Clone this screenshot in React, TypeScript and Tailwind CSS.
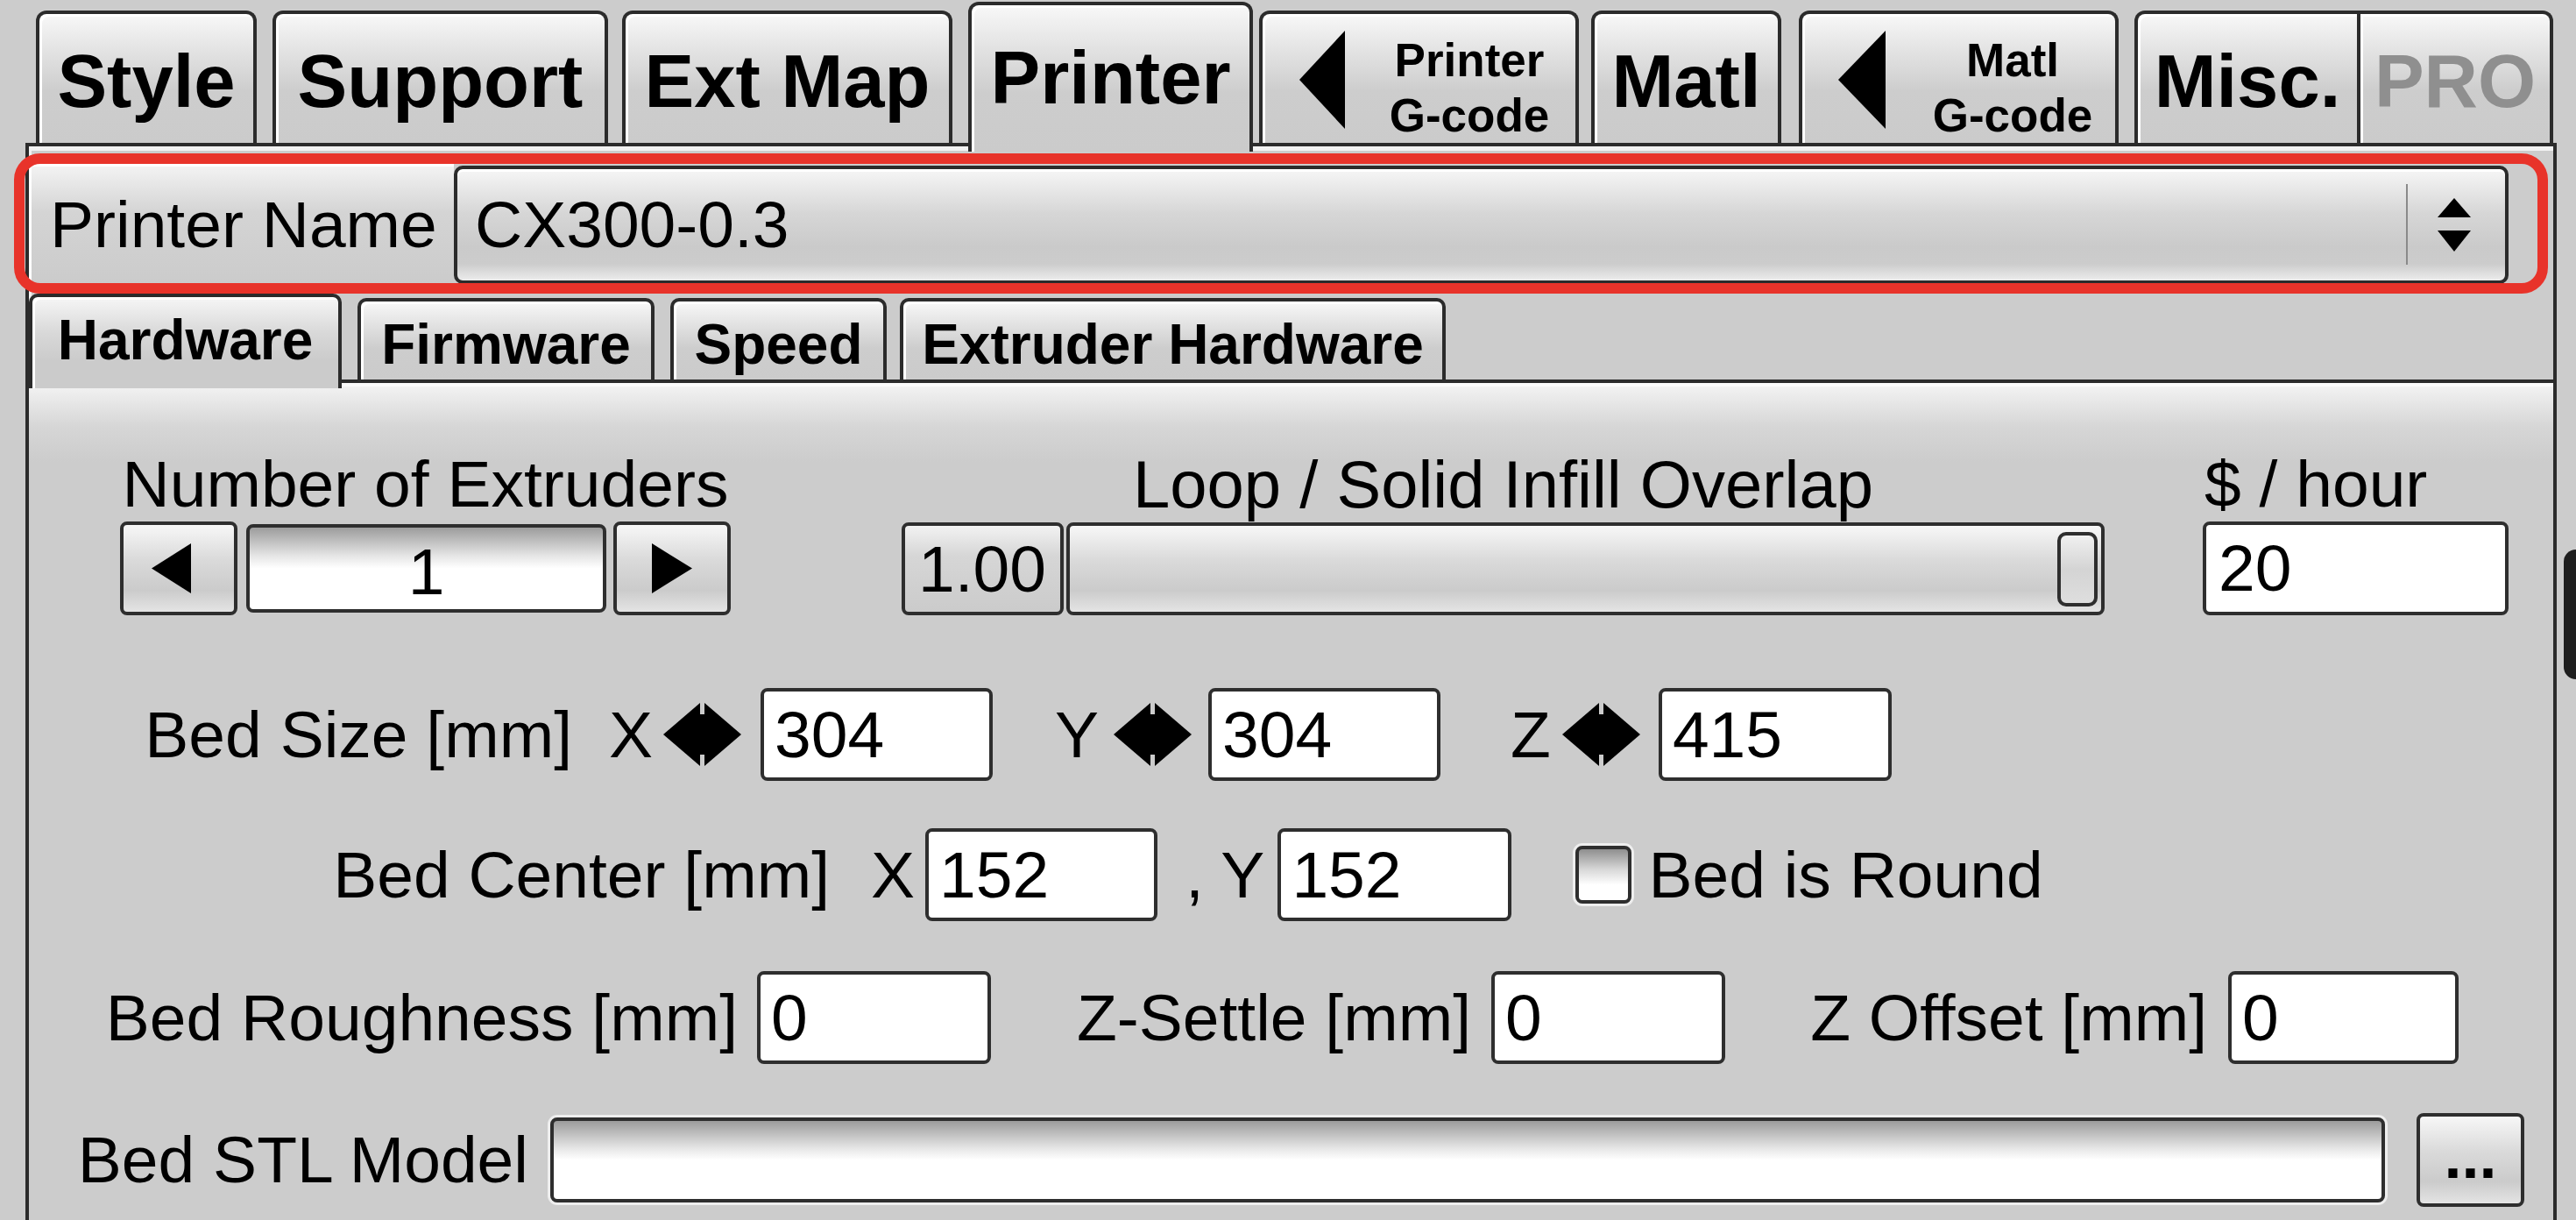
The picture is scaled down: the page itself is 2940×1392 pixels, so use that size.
import React from "react";

const tabBg =
  "bg-[linear-gradient(to_bottom,#f8f8f8_0%,#e2e2e2_30%,#cdcdcd_60%,#cbcbcb_100%)]";
const btnBg =
  "bg-[linear-gradient(to_bottom,#f7f7f7_0%,#dadada_40%,#cbcbcb_75%,#e4e4e4_100%)]";
const fieldBg =
  "bg-[linear-gradient(to_bottom,#9c9c9c_0%,#e6e6e6_35%,#ffffff_50%,#ffffff_100%)]";

function Tab({
  cls,
  children,
}: {
  cls: string;
  children: React.ReactNode;
}) {
  return (
    <div
      className={`box-border flex shrink-0 justify-center border-[4px] border-b-0 border-[#2b2b2b] shadow-[inset_3px_3px_0_#ffffff] ${tabBg} ${cls}`}
    >
      {children}
    </div>
  );
}

function LeftTri({ w, h }: { w: number; h: number }) {
  return (
    <svg width={w} height={h} viewBox={`0 0 ${w} ${h}`} className="shrink-0">
      <path d={`M0 ${h / 2} L${w} 0 V${h} Z`} fill="#000" />
    </svg>
  );
}

function RightTri({ w, h }: { w: number; h: number }) {
  return (
    <svg width={w} height={h} viewBox={`0 0 ${w} ${h}`} className="shrink-0">
      <path d={`M${w} ${h / 2} L0 0 V${h} Z`} fill="#000" />
    </svg>
  );
}

function DArrow({ cls }: { cls: string }) {
  return (
    <svg width="89" height="72" viewBox="0 0 89 72" className={`shrink-0 ${cls}`}>
      <path d="M0 36 L42 0 V72 Z" fill="#000" />
      <path d="M89 36 L47 0 V72 Z" fill="#000" />
      <rect x="40" y="13" width="9" height="46" fill="#000" />
    </svg>
  );
}

function Input({ cls, children }: { cls: string; children?: React.ReactNode }) {
  return (
    <div
      className={`box-border flex h-[106px] shrink-0 items-center rounded-[8px] border-[4px] border-[#2e2e2e] bg-white pl-[12px] text-[75px] leading-none ${cls}`}
    >
      {children}
    </div>
  );
}

export default function App() {
  return (
    <div className="relative h-[1392px] w-[2940px] overflow-hidden bg-[#cccccc] font-['Liberation_Sans',Arial,sans-serif] text-black">
      {/* Top tabs */}
      <div className="flex h-[163px] items-start pl-[41px]">
        <Tab cls="mt-[12px] h-[151px] w-[252px] rounded-t-[12px]">
          <span className="mt-[34px] text-[85px] font-bold leading-none">Style</span>
        </Tab>
        <Tab cls="ml-[18px] mt-[12px] h-[151px] w-[383px] rounded-t-[12px]">
          <span className="mt-[34px] text-[85px] font-bold leading-none">Support</span>
        </Tab>
        <Tab cls="ml-[16px] mt-[12px] h-[151px] w-[377px] rounded-t-[12px]">
          <span className="mt-[34px] whitespace-nowrap text-[85px] font-bold leading-none">Ext Map</span>
        </Tab>
        <Tab cls="relative z-10 ml-[18px] mt-[2px] h-[171px] w-[325px] rounded-t-[12px]">
          <span className="mt-[40px] text-[85px] font-bold leading-none">Printer</span>
        </Tab>
        <Tab cls="ml-[7px] mt-[12px] h-[151px] w-[365px] rounded-t-[12px] !justify-start">
          <div className="ml-[42px] mt-[19px]">
            <LeftTri w={52} h={112} />
          </div>
          <div className="ml-[37px] mt-[21px] flex w-[210px] flex-col items-center text-[53px] font-bold leading-[63px]">
            <span>Printer</span>
            <span>G-code</span>
          </div>
        </Tab>
        <Tab cls="ml-[14px] mt-[12px] h-[151px] w-[217px] rounded-t-[12px]">
          <span className="mt-[34px] text-[85px] font-bold leading-none">Matl</span>
        </Tab>
        <Tab cls="ml-[20px] mt-[12px] h-[151px] w-[365px] rounded-t-[12px] !justify-start">
          <div className="ml-[41px] mt-[19px]">
            <LeftTri w={54} h={112} />
          </div>
          <div className="ml-[40px] mt-[21px] flex w-[210px] flex-col items-center text-[53px] font-bold leading-[63px]">
            <span>Matl</span>
            <span>G-code</span>
          </div>
        </Tab>
        <Tab cls="ml-[18px] mt-[12px] h-[151px] w-[258px] rounded-tl-[12px]">
          <span className="mt-[34px] text-[85px] font-bold leading-none">Misc.</span>
        </Tab>
        <Tab cls="mt-[12px] h-[151px] w-[220px] !border-l-0 rounded-tr-[12px]">
          <span className="mt-[34px] text-[85px] font-bold leading-none text-[#8f8f8f]">PRO</span>
        </Tab>
      </div>

      {/* Panel */}
      <div className="relative ml-[29px] box-border h-[1229px] w-[2889px] border-x-[4px] border-t-[4px] border-[#2b2b2b] shadow-[inset_3px_5px_0_#f2f2f2]">
        {/* Printer name row */}
        <div className="mt-[20px] flex h-[138px]">
          <div className="flex h-full w-[485px] shrink-0 items-center bg-[linear-gradient(to_bottom,#f4f4f4_0%,#d4d4d4_40%,#cbcbcb_100%)] pl-[24px] text-[75px] leading-none shadow-[inset_3px_3px_0_#ffffff]">
            Printer Name
          </div>
          <div
            className={`box-border flex h-[135px] w-[2345px] shrink-0 items-center self-center rounded-[10px] border-[4px] border-[#2b2b2b] bg-[linear-gradient(to_bottom,#f6f6f6_0%,#d6d6d6_40%,#cacaca_70%,#cccccc_85%,#ececec_100%)] shadow-[inset_0_3px_0_#ffffff]`}
          >
            <span className="pl-[20px] text-[75px] leading-none">CX300-0.3</span>
            <div className="flex-1" />
            <div className="h-[92px] w-[2px] bg-[#8a8a8a]" />
            <div className="ml-[34px] mr-[39px] flex w-[38px] flex-col items-center gap-[15px]">
              <svg width="38" height="22" viewBox="0 0 38 22">
                <path d="M0 22 L19 0 L38 22 Z" fill="#000" />
              </svg>
              <svg width="38" height="24" viewBox="0 0 38 24">
                <path d="M0 0 H38 L19 24 Z" fill="#000" />
              </svg>
            </div>
          </div>
        </div>

        {/* Sub tabs */}
        <div className="mt-[10px] flex h-[98px] items-start">
          <Tab cls="relative z-10 h-[108px] w-[357px] rounded-t-[10px] !bg-[linear-gradient(to_bottom,#f6f6f6_0%,#d8d8d8_40%,#cbcbcb_70%,#cbcbcb_100%)]">
            <span className="mt-[17px] text-[64px] font-bold leading-none">Hardware</span>
          </Tab>
          <Tab cls="ml-[18px] mt-[5px] h-[93px] w-[339px] rounded-t-[10px]">
            <span className="mt-[17px] text-[64px] font-bold leading-none">Firmware</span>
          </Tab>
          <Tab cls="ml-[18px] mt-[5px] h-[93px] w-[247px] rounded-t-[10px]">
            <span className="mt-[17px] text-[64px] font-bold leading-none">Speed</span>
          </Tab>
          <Tab cls="ml-[15px] mt-[5px] h-[93px] w-[623px] rounded-t-[10px]">
            <span className="mt-[17px] whitespace-nowrap text-[64px] font-bold leading-none">Extruder Hardware</span>
          </Tab>
        </div>

        {/* Content */}
        <div className="h-[980px] border-t-[4px] border-[#2b2b2b] bg-[linear-gradient(to_bottom,#f4f4f4_0px,#d6d6d6_50px,#cccccc_90px,#cccccc_100%)] pt-[78px] shadow-[inset_0_4px_0_#fafafa]">
          {/* Row 1 */}
          <div className="flex items-start pl-[104px]">
            <div className="flex w-[697px] shrink-0 flex-col items-center">
              <div className="whitespace-nowrap text-[75px] leading-none">Number of Extruders</div>
              <div className="mt-[5px] flex h-[107px] w-full">
                <div className={`box-border flex h-full w-[134px] items-center justify-center rounded-[8px] border-[4px] border-[#2e2e2e] pr-[18px] ${btnBg}`}>
                  <LeftTri w={45} h={57} />
                </div>
                <div className={`ml-[10px] box-border flex h-[101px] w-[411px] items-center justify-center self-center rounded-[8px] border-[4px] border-[#2e2e2e] pt-[8px] text-[75px] leading-none ${fieldBg}`}>
                  1
                </div>
                <div className={`ml-[8px] box-border flex h-full w-[134px] items-center justify-center rounded-[8px] border-[4px] border-[#2e2e2e] ${btnBg}`}>
                  <RightTri w={46} h={57} />
                </div>
              </div>
            </div>

            <div className="ml-[195px] flex w-[1373px] shrink-0 flex-col items-center">
              <div className="whitespace-nowrap text-[76px] leading-none">Loop / Solid Infill Overlap</div>
              <div className="mt-[5px] flex h-[106px] w-full">
                <div className="box-border flex h-full w-[185px] items-center rounded-[8px] border-[4px] border-[#2e2e2e] bg-[linear-gradient(to_bottom,#f2f2f2_0%,#d6d6d6_35%,#cbcbcb_100%)] pl-[15px] text-[75px] leading-none">
                  1.00
                </div>
                <div className={`ml-[3px] box-border flex h-full w-[1185px] items-center justify-end rounded-[8px] border-[4px] border-[#2e2e2e] pr-[4px] ${btnBg}`}>
                  <div className="box-border h-[85px] w-[46px] rounded-[10px] border-[4px] border-[#2e2e2e] bg-[linear-gradient(to_bottom,#f0f0f0_0%,#d4d4d4_50%,#dedede_100%)]" />
                </div>
              </div>
            </div>

            <div className="ml-[112px] flex w-[349px] shrink-0 flex-col items-start">
              <div className="whitespace-nowrap pl-[2px] text-[75px] leading-none">$ / hour</div>
              <div className="mt-[5px] w-full">
                <Input cls="!h-[107px] w-full !pl-[14px]">20</Input>
              </div>
            </div>
          </div>

          {/* Row 2 */}
          <div className="mt-[83px] flex h-[106px] items-center text-[75px] leading-none">
            <div className="w-[620px] shrink-0 text-right">Bed Size [mm]</div>
            <span className="ml-[42px]">X</span>
            <DArrow cls="ml-[12px]" />
            <Input cls="ml-[22px] w-[265px]">304</Input>
            <span className="ml-[71px]">Y</span>
            <DArrow cls="ml-[17px]" />
            <Input cls="ml-[19px] w-[265px]">304</Input>
            <span className="ml-[80px]">Z</span>
            <DArrow cls="ml-[13px]" />
            <Input cls="ml-[21px] w-[266px]">415</Input>
          </div>

          {/* Row 3 */}
          <div className="mt-[54px] flex h-[106px] items-center text-[75px] leading-none">
            <div className="w-[914px] shrink-0 text-right">Bed Center [mm]</div>
            <span className="ml-[47px]">X</span>
            <Input cls="ml-[12px] w-[265px]">152</Input>
            <span className="ml-[32px] whitespace-pre">, Y</span>
            <Input cls="ml-[15px] w-[267px]">152</Input>
            <div className="ml-[73px] box-border h-[66px] w-[64px] shrink-0 rounded-[8px] border-[4px] border-[#2e2e2e] bg-[linear-gradient(to_bottom,#8e8e8e_0%,#d8d8d8_40%,#ffffff_70%,#ffffff_100%)] shadow-[0_0_0_3px_#eeeeee]" />
            <span className="ml-[19px] whitespace-nowrap">Bed is Round</span>
          </div>

          {/* Row 4 */}
          <div className="mt-[57px] flex h-[106px] items-center text-[75px] leading-none">
            <div className="w-[809px] shrink-0 whitespace-nowrap text-right">Bed Roughness [mm]</div>
            <Input cls="ml-[22px] w-[267px]">0</Input>
            <div className="w-[548px] shrink-0 whitespace-nowrap text-right">Z-Settle [mm]</div>
            <Input cls="ml-[23px] w-[267px]">0</Input>
            <div className="w-[550px] shrink-0 whitespace-nowrap text-right">Z Offset [mm]</div>
            <Input cls="ml-[24px] w-[263px]">0</Input>
          </div>

          {/* Row 5 */}
          <div className="mt-[56px] flex h-[107px] items-center text-[75px] leading-none">
            <div className="w-[570px] shrink-0 whitespace-nowrap text-right">Bed STL Model</div>
            <div className={`ml-[25px] box-border h-[97px] w-[2094px] shrink-0 rounded-[8px] border-[4px] border-[#2e2e2e] shadow-[0_0_0_3px_#eeeeee] ${fieldBg}`} />
            <div className={`ml-[36px] box-border flex h-[107px] w-[123px] shrink-0 items-end justify-center rounded-[8px] border-[4px] border-[#2e2e2e] pb-[18px] text-[72px] font-bold leading-none ${btnBg}`}>
              ...
            </div>
          </div>
        </div>
      </div>

      {/* Red highlight annotation */}
      <div className="pointer-events-none absolute left-[16px] top-[175px] box-border h-[160px] w-[2892px] rounded-[30px] border-[12px] border-[#e8332a]" />

      {/* dark edge at right */}
      <div className="absolute left-[2926px] top-[627px] h-[148px] w-[20px] rounded-l-[14px] bg-[#1e1e1e]" />
    </div>
  );
}
